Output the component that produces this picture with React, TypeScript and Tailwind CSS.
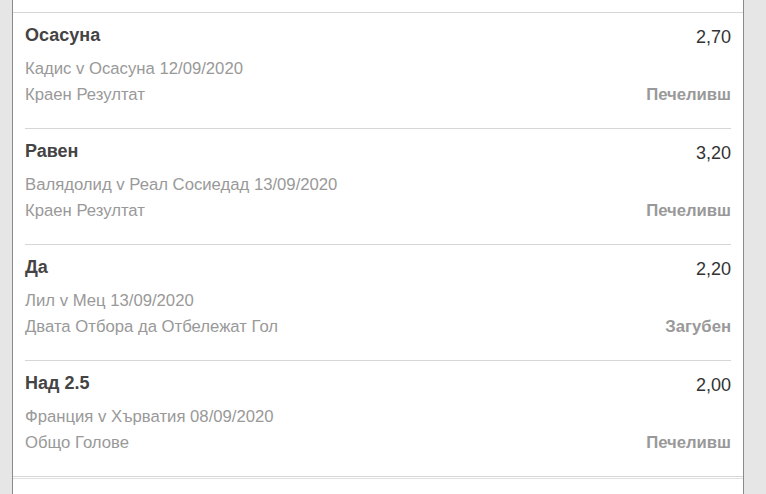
import React from "react";

type Bet = {
  pick: string;
  odds: string;
  event: string;
  market: string;
  result: string;
};

const BETS: Bet[] = [
  { pick: "Осасуна", odds: "2,70", event: "Кадис v Осасуна 12/09/2020", market: "Краен Резултат", result: "Печеливш" },
  { pick: "Равен", odds: "3,20", event: "Валядолид v Реал Сосиедад 13/09/2020", market: "Краен Резултат", result: "Печеливш" },
  { pick: "Да", odds: "2,20", event: "Лил v Мец 13/09/2020", market: "Двата Отбора да Отбележат Гол", result: "Загубен" },
  { pick: "Над 2.5", odds: "2,00", event: "Франция v Хърватия 08/09/2020", market: "Общо Голове", result: "Печеливш" },
];

function BetRow({ bet, last }: { bet: Bet; last: boolean }) {
  return (
    <div className={last ? "border-b border-[#d6d6d6] px-[12px]" : "mx-[12px] border-b border-[#d6d6d6]"}>
      <div className="pt-[10px] pb-[21px]">
        <div className="flex items-end justify-between h-[24px]">
          <span className="text-[18px] font-bold text-[#444] leading-[24px]">{bet.pick}</span>
          <span className="text-[18px] text-[#333] leading-[24px] translate-y-[2px]">{bet.odds}</span>
        </div>
        <div className="mt-[9px] text-[16.7px] leading-[26px] text-[#999]">{bet.event}</div>
        <div className="flex justify-between text-[16.7px] leading-[25px]">
          <span className="text-[#999]">{bet.market}</span>
          <span className="font-bold text-[#999]">{bet.result}</span>
        </div>
      </div>
    </div>
  );
}

export default function App() {
  return (
    <div
      className="w-[766px] h-[494px] overflow-hidden flex bg-[#e6e6e6]"
      style={{ fontFamily: '"Liberation Sans", Arial, sans-serif' }}
    >
      <div className="w-[12px] shrink-0" />
      <div className="w-[732px] shrink-0 bg-white border-x border-[#8a8a8a] pt-[12px]">
        <div className="border-t border-[#d6d6d6]">
          {BETS.map((b, i) => (
            <BetRow key={i} bet={b} last={i === BETS.length - 1} />
          ))}
          <div className="h-[1px] mt-[1px] bg-[#e0e0e0]" />
        </div>
      </div>
      <div className="flex-1" />
    </div>
  );
}
